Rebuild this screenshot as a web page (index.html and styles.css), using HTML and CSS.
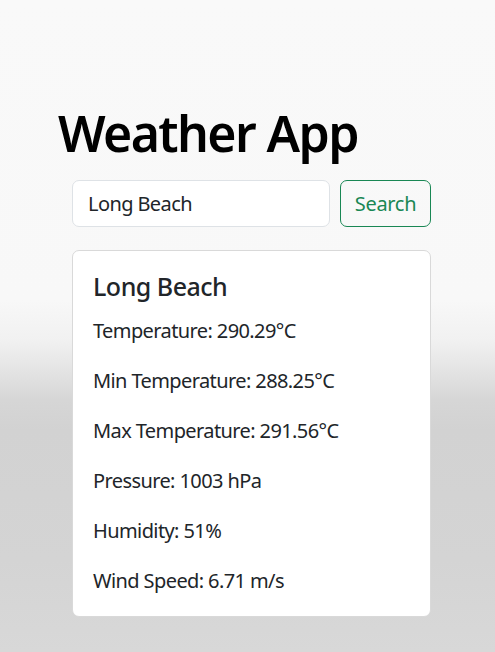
FILE: index.html
```html
<!DOCTYPE html>
<html lang="en">
<head>
<meta charset="utf-8">
<title>Weather App</title>
<link rel="stylesheet" href="styles.css">
</head>
<body>
<main class="page">
  <h1 class="title">Weather App</h1>
  <div class="panel">
    <form class="search">
      <input class="search-input" type="text" value="Long Beach">
      <button class="search-btn" type="button">Search</button>
    </form>
    <section class="card">
      <h5 class="card-title">Long Beach</h5>
      <p class="card-text">Temperature: 290.29°C</p>
      <p class="card-text">Min Temperature: 288.25°C</p>
      <p class="card-text">Max Temperature: 291.56°C</p>
      <p class="card-text">Pressure: 1003 hPa</p>
      <p class="card-text">Humidity: 51%</p>
      <p class="card-text">Wind Speed: 6.71 m/s</p>
    </section>
  </div>
</main>
</body>
</html>
```
FILE: styles.css
```css
* { box-sizing: border-box; }
html { font-size: 20px; }
body {
  margin: 0;
  min-height: 652px;
  font-family: "Noto Sans", "Open Sans", sans-serif;
  color: #212529;
  line-height: 1.5;
  letter-spacing: -0.6px;
  background: linear-gradient(to bottom,
    #f9f9f9 0px, #f8f8f8 300px, #f1f1f1 340px, #e4e4e4 370px,
    #d6d6d6 400px, #d2d2d2 430px, #d4d4d4 560px, #d8d8d8 652px);
}
.page {
  padding: 103px 0 0 58px;
  width: 431px;
}
.title {
  margin: 0 0 17px;
  font-size: 50px;
  font-weight: 600;
  line-height: 1.2;
  letter-spacing: -1.6px;
  color: #000;
}
.panel {
  margin-left: 14px;
  width: 359px;
}
.search {
  display: flex;
  gap: 10px;
  margin: 0 0 23px;
}
.search-input {
  flex: 1;
  width: 0;
  min-width: 0;
  height: 47px;
  padding: 7px 15px;
  font: inherit;
  font-size: 20px;
  letter-spacing: -0.6px;
  color: #212529;
  background: #fff;
  border: 1px solid #dee2e6;
  border-radius: 7px;
}
.search-btn {
  width: 91px;
  height: 47px;
  font: inherit;
  font-size: 20px;
  letter-spacing: -0.3px;
  color: #198754;
  background: transparent;
  border: 1px solid #198754;
  border-radius: 7px;
  padding: 0;
}
.card {
  background: #fff;
  border: 1px solid #d9d9d9;
  border-radius: 7px;
  padding: 20px 20px 20px;
}
.card-title {
  margin: 0 0 15px;
  font-size: 25px;
  font-weight: 500;
  line-height: 1.2;
  letter-spacing: -0.5px;
}
.card-text {
  margin: 0 0 20px;
  font-size: 20px;
}
.card-text:last-child { margin-bottom: 0; }
```
